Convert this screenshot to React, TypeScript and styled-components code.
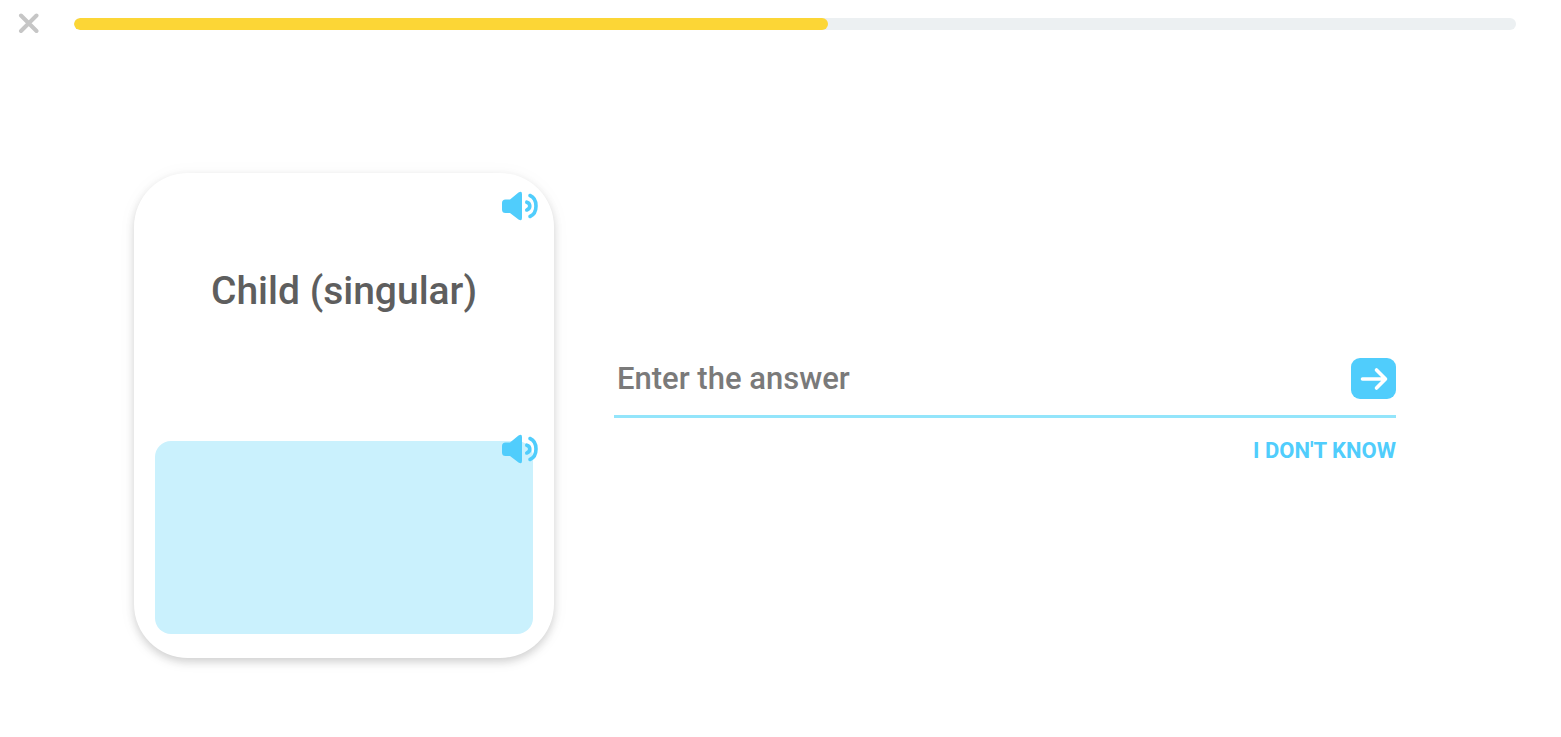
import React, { useState } from "react";
import styled, { createGlobalStyle } from "styled-components";

const GlobalStyle = createGlobalStyle`
  *, *::before, *::after { box-sizing: border-box; }
  body {
    margin: 0;
    background: #ffffff;
    font-family: Roboto, "Liberation Sans", sans-serif;
  }
  button, input { font-family: inherit; }
`;

const IconButton = styled.button`
  display: block;
  padding: 0;
  border: 0;
  background: none;
  cursor: pointer;
  line-height: 0;
`;

const Header = styled.header`
  display: flex;
  align-items: center;
  gap: 34px;
  height: 48px;
  padding: 0 45px 0 18px;
`;

const Progress = styled.div`
  flex: 1;
  height: 12px;
  border-radius: 6px;
  background: #ecf0f2;
  overflow: hidden;
`;

const ProgressFill = styled.div`
  height: 100%;
  border-radius: 6px;
  background: #fcd636;
`;

const Main = styled.main`
  display: flex;
  align-items: center;
  gap: 60px;
  padding: 125px 165px 72px 134px;
`;

const Card = styled.section`
  flex: 0 0 420px;
  padding: 0 21px 24px;
  border-radius: 54px;
  background: #ffffff;
  box-shadow: 0 4px 8px rgba(0, 0, 0, 0.16), 0 2px 20px rgba(0, 0, 0, 0.04);
`;

const Side = styled.div<{ $covered?: boolean }>`
  position: relative;
  display: flex;
  align-items: center;
  justify-content: center;
  height: ${(p) => (p.$covered ? "193px" : "268px")};
  padding-bottom: ${(p) => (p.$covered ? "0" : "32px")};
  border-radius: 16px;
  background: ${(p) => (p.$covered ? "#caf1fd" : "transparent")};
`;

const SpeakerButton = styled(IconButton)<{ $top: number }>`
  position: absolute;
  top: ${(p) => p.$top}px;
  right: -5px;
`;

const Word = styled.h1`
  margin: 0;
  color: #5e5e5e;
  font-size: 39px;
  font-weight: 500;
  line-height: 48px;
  white-space: nowrap;
`;

const Form = styled.form`
  flex: 1;
  min-width: 0;
  display: flex;
  flex-direction: column;
  align-items: flex-end;
  gap: 19px;
  padding-bottom: 9px;
`;

const Field = styled.div`
  display: flex;
  align-items: center;
  width: 100%;
  padding-bottom: 16px;
  border-bottom: 3px solid #93e5fb;
`;

const AnswerInput = styled.input`
  flex: 1;
  min-width: 0;
  height: 40px;
  padding: 0 3px;
  border: 0;
  outline: 0;
  background: none;
  color: #5e5e5e;
  font-size: 31px;
  font-weight: 500;
  &::placeholder { color: #7a7a7a; opacity: 1; }
`;

const SubmitButton = styled.button`
  width: 45px;
  height: 41px;
  padding: 0;
  border: 0;
  border-radius: 9px;
  background: #50cdfc;
  line-height: 0;
  cursor: pointer;
`;

const SkipButton = styled.button`
  padding: 0;
  border: 0;
  background: none;
  color: #50cdfc;
  font-size: 22px;
  font-weight: 700;
  line-height: 28px;
  cursor: pointer;
`;

const Speaker = () => (
  <svg width="36" height="30" viewBox="0 0 36 30" aria-hidden="true">
    <path
      d="M3.5 8.5H8L16.5 1.5Q20 -0.5 20 3V27Q20 30.5 16.5 28.5L8 22H3.5Q0 22 0 18.5V12Q0 8.500 3.500 8.500Z"
      fill="#50cdfc"
    />
    <path
      d="M24.8 11.2C28.800 12.500 28.800 17.500 24.800 19M28 4.500C36 8 36 22 28 25.500"
      fill="none"
      stroke="#50cdfc"
      strokeWidth="3.6"
      strokeLinecap="round"
    />
  </svg>
);

export default function App() {
  const [answer, setAnswer] = useState("");
  const progress = 52.3;
  return (
    <>
      <GlobalStyle />
      <Header>
        <IconButton type="button" aria-label="Close">
          <svg width="22" height="22" viewBox="0 0 22 22" aria-hidden="true">
            <path d="M3 2.5L18.5 18M18.5 2.5L3 18" stroke="#c6c6c6" strokeWidth="4" strokeLinecap="round" />
          </svg>
        </IconButton>
        <Progress role="progressbar" aria-label="Lesson progress" aria-valuenow={progress}>
          <ProgressFill style={{ width: `${progress}%` }} />
        </Progress>
      </Header>
      <Main>
        <Card>
          <Side>
            <Word>Child (singular)</Word>
            <SpeakerButton type="button" aria-label="Play the word" $top={18}>
              <Speaker />
            </SpeakerButton>
          </Side>
          <Side $covered>
            <SpeakerButton type="button" aria-label="Play the translation" $top={-7}>
              <Speaker />
            </SpeakerButton>
          </Side>
        </Card>
        <Form onSubmit={(e) => e.preventDefault()}>
          <Field>
            <AnswerInput
              type="text"
              aria-label="Enter the answer"
              placeholder="Enter the answer"
              value={answer}
              onChange={(e) => setAnswer(e.target.value)}
            />
            <SubmitButton type="submit" aria-label="Submit">
              <svg width="45" height="41" viewBox="0 0 45 41" aria-hidden="true">
                <path
                  d="M11.5 21H34M25.5 12L34.5 21L25.5 30"
                  fill="none"
                  stroke="#ffffff"
                  strokeWidth="3.6"
                  strokeLinecap="round"
                  strokeLinejoin="round"
                />
              </svg>
            </SubmitButton>
          </Field>
          <SkipButton type="button">I DON'T KNOW</SkipButton>
        </Form>
      </Main>
    </>
  );
}
